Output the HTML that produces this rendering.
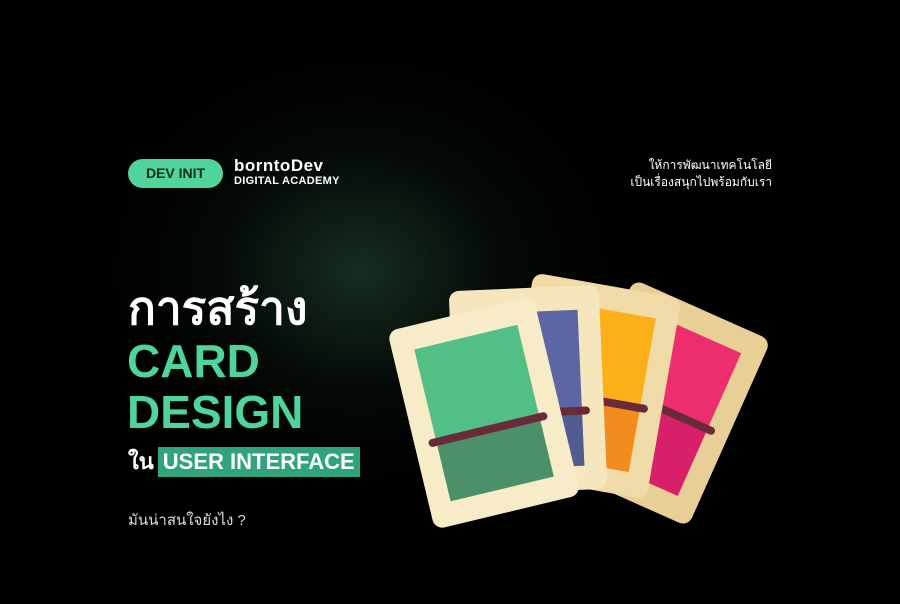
<!DOCTYPE html>
<html><head><meta charset="utf-8"><style>
body{margin:0;width:900px;height:604px;overflow:hidden;background:#000;font-family:"Liberation Sans",sans-serif;position:relative}
.bg{position:absolute;inset:0;background:radial-gradient(ellipse 260px 220px at 360px 270px,rgba(50,100,70,.45),rgba(20,45,30,.2) 55%,rgba(0,0,0,0) 100%)}
.pill{position:absolute;left:128px;top:159px;width:95px;height:29px;border-radius:15px;background:#4fd49b;color:#0c2a1c;font-weight:bold;font-size:14px;line-height:29px;text-align:center}
.logo{position:absolute;left:234px;top:158px;color:#fff;font-weight:bold}
.logo .a{font-size:17px;line-height:16px;letter-spacing:.5px}
.logo .b{font-size:11px;line-height:14px;letter-spacing:.3px}
.tag{position:absolute;right:128px;top:157px;color:#fff;font-size:12px;line-height:17px;text-align:right}
.t1{position:absolute;left:128px;top:283px;color:#fff;font-weight:bold;font-size:46px;line-height:50px}
.t2{position:absolute;left:127px;top:336px;color:#4fd49b;font-weight:bold;font-size:46px;line-height:50px}
.t3{position:absolute;left:127px;top:387px;color:#4fd49b;font-weight:bold;font-size:46px;line-height:50px}
.t4{position:absolute;left:128px;top:447px;color:#fff;font-weight:bold;font-size:22px;line-height:30px}
.t4 span{display:inline-block;background:#2fa37a;color:#fff;padding:0 5px;margin-left:4px}
.t5{position:absolute;left:128px;top:508px;color:#ddd;font-size:15px}
svg{position:absolute;left:0;top:0}
</style></head><body>
<div class="bg"></div>
<div class="pill">DEV INIT</div>
<div class="logo"><div class="a">borntoDev</div><div class="b">DIGITAL ACADEMY</div></div>
<div class="tag">ให้การพัฒนาเทคโนโลยี<br>เป็นเรื่องสนุกไปพร้อมกับเรา</div>
<div class="t1">การสร้าง</div>
<div class="t2">CARD</div>
<div class="t3">DESIGN</div>
<div class="t4">ใน<span>USER INTERFACE</span></div>
<div class="t5">มันน่าสนใจยังไง ?</div>
<svg width="900" height="604">
<g transform="rotate(24 661 403)"><rect x="586" y="301" width="150" height="204" rx="10" fill="#e8cf96"/><rect x="608" y="325" width="106" height="156" fill="#ec2d6e"/><rect x="608" y="408" width="106" height="73" fill="#d81f6a"/><line x1="604" y1="408" x2="718" y2="408" stroke="#6b2a3a" stroke-width="8" stroke-linecap="round"/></g>
<g transform="rotate(10 590 386)"><rect x="515" y="284" width="150" height="204" rx="10" fill="#f0dba8"/><rect x="537" y="308" width="106" height="156" fill="#fbb019"/><rect x="537" y="399" width="106" height="65" fill="#f28c1e"/><line x1="533" y1="399" x2="647" y2="399" stroke="#6b2a3a" stroke-width="8" stroke-linecap="round"/></g>
<g transform="rotate(-2.5 528 390)"><rect x="453" y="288" width="150" height="204" rx="10" fill="#f5e6bd"/><rect x="475" y="312" width="106" height="156" fill="#5c66a4"/><rect x="475" y="413" width="106" height="55" fill="#525c92"/><line x1="471" y1="413" x2="585" y2="413" stroke="#6b2a3a" stroke-width="8" stroke-linecap="round"/></g>
<g transform="rotate(-13.5 484 413)"><rect x="409" y="311" width="150" height="204" rx="10" fill="#f8ebc8"/><rect x="431" y="335" width="106" height="156" fill="#52bf86"/><rect x="431" y="430" width="106" height="61" fill="#4b9069"/><line x1="427" y1="430" x2="541" y2="430" stroke="#6b2a3a" stroke-width="8" stroke-linecap="round"/></g>
</svg>
</body></html>
